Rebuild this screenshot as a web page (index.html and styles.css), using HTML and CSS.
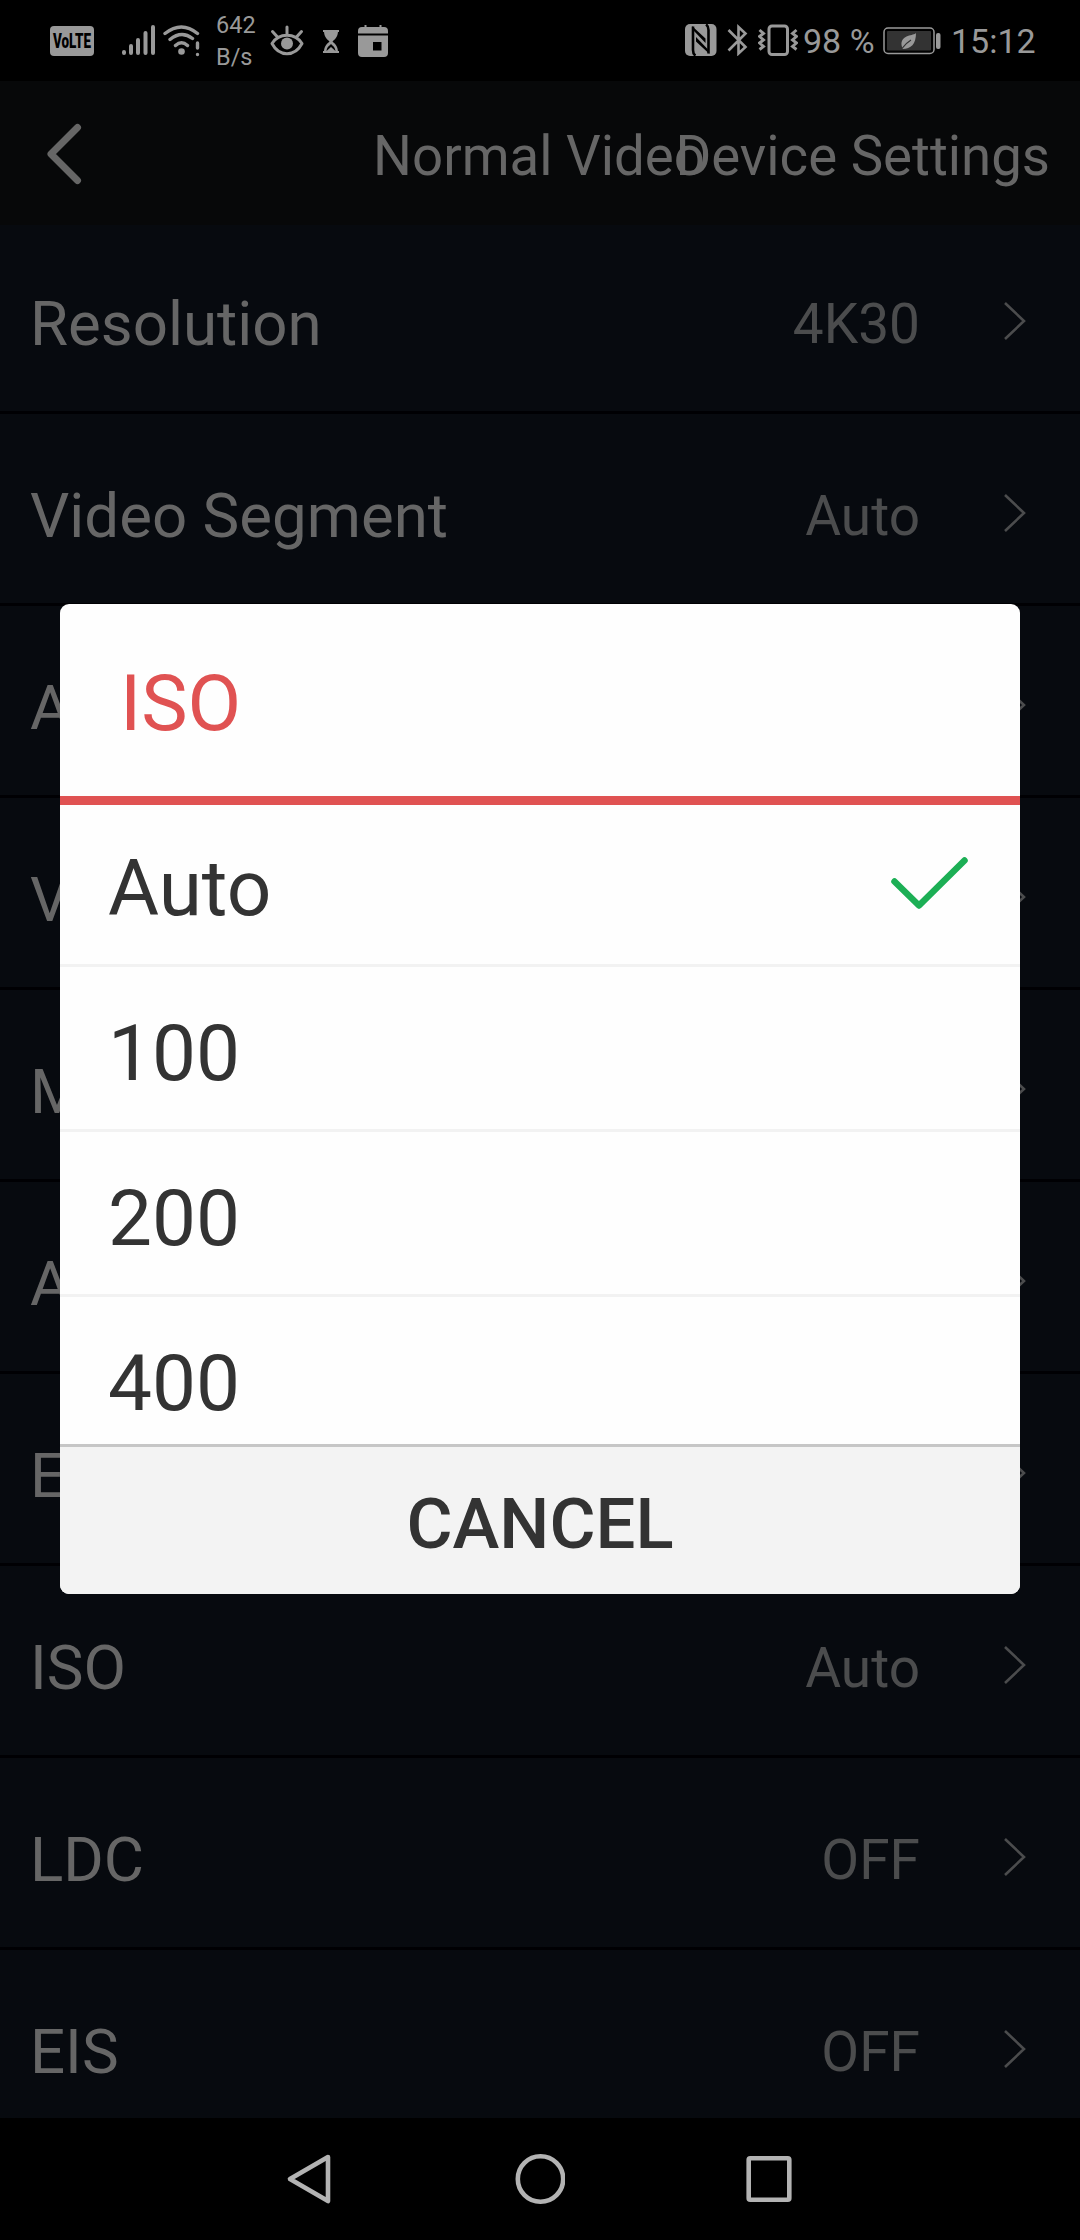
FILE: index.html
```html
<!DOCTYPE html>
<html lang="en">
<head>
<meta charset="utf-8">
<title>Device Settings</title>
<link rel="stylesheet" href="styles.css">
</head>
<body>
<div class="screen">
  <div class="statusbar">
    <div class="status-left">
      <svg class="volte" width="44" height="30" viewBox="0 0 44 30"><rect width="44" height="30" rx="4" fill="#999"/><text x="3" y="22" textLength="38" lengthAdjust="spacingAndGlyphs" class="volte-text">VoLTE</text></svg>
      <svg class="signal" width="34" height="32" viewBox="0 0 34 32" stroke="#999" stroke-width="4" stroke-linecap="round"><path d="M2 28v1M9 22v7M16 16v13M23.500 9v20M31 3v26"/></svg>
      <svg class="wifi" width="37" height="32" viewBox="0 0 37 32" fill="none" stroke="#999" stroke-width="3.400" stroke-linecap="round"><path d="M2 8.500Q18.500-4.500 34.500 8.500M7 14.500Q18.500 5 29.500 13.500M12.500 20.500Q18.500 15 24.500 20.500"/><circle cx="18.500" cy="26.500" r="3.300" fill="#999" stroke="none"/><path d="M34.500 18v5M34.500 29.400v.2"/></svg>
      <div class="speed">642<br>B/s</div>
      <svg class="eye" width="34" height="31" viewBox="0 0 34 31" fill="none" stroke="#999" stroke-width="3" stroke-linecap="round"><path d="M2 18.500C9 7.500 25 7.500 32 18.500C25 32 9 32 2 18.500ZM17 2v7M2.500 6.500l4.500 5M31.500 6.500l-4.500 5" stroke-linejoin="round"/><circle cx="17" cy="18.500" r="6" fill="#999" stroke="none"/></svg>
      <svg class="hourglass" width="18" height="23" viewBox="0 0 18 23"><path d="M1 1h16M1 22h16" stroke="#999" stroke-width="2"/><path d="M2 1h14c0 6-3 8-5.500 10.500C13 14 16 16 16 22H2c0-6 3-8 5.500-10.500C5 9 2 7 2 1Z" fill="#999"/><path d="M4.500 21c.5-4 2.500-5 4.500-7 2 2 4 3 4.500 7l-4.500-4Z" fill="#000"/></svg>
      <svg class="calendar" width="30" height="32" viewBox="0 0 30 32" fill="#999"><path d="M0 8.500V6q0-4 4-4h2.500V0h2v2h13V0h2v2H26q4 0 4 4v2.500ZM0 10.500h30V28q0 4-4 4H4q-4 0-4-4Z"/><path d="M15 17h8.500v8.500H15Z" fill="#000"/></svg>
    </div>
    <div class="status-right">
      <svg class="nfc" width="32" height="32" viewBox="0 0 32 32"><rect width="31.500" height="32" rx="5" fill="#999"/><path d="M8 2.500V26Q8 30 10.500 31.500M23.500 29.500V6Q23.500 2 21 .500" fill="none" stroke="#000" stroke-width="2.600"/><path d="M7 2L20.500 14.500V19L9 7ZM24.500 30L11 17.500V13L22.500 25Z" fill="#000"/></svg>
      <svg class="bluetooth" width="21" height="32" viewBox="0 0 21 32" fill="none" stroke="#999" stroke-width="2.600" stroke-linejoin="miter"><path d="M1.500 6L18.500 23 11.500 29.500V3L18.500 9.500 1.500 26.500"/></svg>
      <svg class="vibrate" width="40" height="32" viewBox="0 0 40 32" fill="none" stroke="#999" stroke-width="3"><rect x="11" y="2" width="18.500" height="28.500" rx="3"/><path d="M1.500 6l4 3.500-4 3 4 3.500-4 3 4 3.500-4 3M38.500 6l-4 3.500 4 3-4 3.500 4 3-4 3.500 4 3" stroke-width="2.900"/></svg>
      <div class="battery-level">98 %</div>
      <svg class="battery" width="58" height="28" viewBox="0 0 58 28"><rect x="1" y="1" width="50" height="25.500" rx="4" fill="#000" stroke="#999" stroke-width="1.500"/><rect x="4" y="4" width="44" height="19.500" rx="1" fill="#333"/><path d="M33 6C31 9 18 7 18.500 18l1 4C28 22 33 17 33 6Z" fill="#999"/><path d="M18.500 22Q23 16 28 13" stroke="#333" stroke-width="1.200" fill="none"/><rect x="53" y="6" width="4.500" height="16" rx="2" fill="#999"/></svg>
      <div class="clock">15:12</div>
    </div>
  </div>

  <div class="header">
    <svg class="back" width="36" height="62" viewBox="0 0 36 62"><path d="M31.500 4.500L5 31l26.500 26.500" fill="none" stroke="#666" stroke-width="7" stroke-linecap="round" stroke-linejoin="round"/></svg>
    <div class="header-title">Normal Video</div>
    <div class="header-link">Device Settings</div>
  </div>

  <div class="settings">
    <div class="row"><span class="label">Resolution</span><span class="value">4K30</span><svg class="chevron" viewBox="0 0 22 38"><path d="M1 1l19 18L1 37"/></svg></div>
    <div class="row"><span class="label">Video Segment</span><span class="value">Auto</span><svg class="chevron" viewBox="0 0 22 38"><path d="M1 1l19 18L1 37"/></svg></div>
    <div class="row"><span class="label">A</span><span class="value"></span><svg class="chevron" viewBox="0 0 22 38"><path d="M1 1l19 18L1 37"/></svg></div>
    <div class="row"><span class="label">V</span><span class="value"></span><svg class="chevron" viewBox="0 0 22 38"><path d="M1 1l19 18L1 37"/></svg></div>
    <div class="row"><span class="label">M</span><span class="value"></span><svg class="chevron" viewBox="0 0 22 38"><path d="M1 1l19 18L1 37"/></svg></div>
    <div class="row"><span class="label">A</span><span class="value"></span><svg class="chevron" viewBox="0 0 22 38"><path d="M1 1l19 18L1 37"/></svg></div>
    <div class="row"><span class="label">E</span><span class="value"></span><svg class="chevron" viewBox="0 0 22 38"><path d="M1 1l19 18L1 37"/></svg></div>
    <div class="row"><span class="label">ISO</span><span class="value">Auto</span><svg class="chevron" viewBox="0 0 22 38"><path d="M1 1l19 18L1 37"/></svg></div>
    <div class="row"><span class="label">LDC</span><span class="value">OFF</span><svg class="chevron" viewBox="0 0 22 38"><path d="M1 1l19 18L1 37"/></svg></div>
    <div class="row"><span class="label">EIS</span><span class="value">OFF</span><svg class="chevron" viewBox="0 0 22 38"><path d="M1 1l19 18L1 37"/></svg></div>
  </div>

  <div class="navbar">
    <svg width="50" height="52" viewBox="0 0 50 52"><path d="M45 4L7 26l38 22Z"/></svg>
    <svg width="52" height="52" viewBox="0 0 52 52"><circle cx="26" cy="26" r="22.700"/></svg>
    <svg width="50" height="52" viewBox="0 0 50 52"><rect x="4.700" y="5.200" width="40.600" height="41.600" rx="1.500"/></svg>
  </div>

  <div class="dialog">
    <div class="dialog-title">ISO</div>
    <div class="options">
      <div class="option"><span>Auto</span><svg class="check" width="78" height="54" viewBox="0 0 78 54"><path d="M4.500 25.500L29 49.500 74.500 4.500"/></svg></div>
      <div class="option"><span>100</span></div>
      <div class="option"><span>200</span></div>
      <div class="option"><span>400</span></div>
    </div>
    <div class="cancel">CANCEL</div>
  </div>
</div>
</body>
</html>
```
FILE: styles.css
```css
* { box-sizing: border-box; }
body { margin: 0; background: #000; font-family: Roboto, sans-serif; }
svg { display: block; flex: none; }
.screen { position: relative; width: 1080px; height: 2240px; overflow: hidden; display: flex; flex-direction: column; }

.statusbar { height: 81px; flex: none; display: flex; justify-content: space-between; padding: 0 46px 0 50px; background: #000; color: #999; }
.status-left, .status-right { display: flex; align-items: flex-start; }
.volte { margin-top: 26px; overflow: visible; }
.volte-text { font: 900 20px Roboto, sans-serif; fill: #000; }
.signal { margin: 24px 0 0 28px; }
.wifi { margin: 25px 0 0 7px; }
.speed { width: 44px; margin: 9px 0 0 16px; font-size: 23.5px; line-height: 32px; white-space: nowrap; }
.eye { margin: 25px 0 0 10px; }
.hourglass { margin: 30px 0 0 18px; }
.calendar { margin: 25px 0 0 18px; }
.nfc { margin-top: 24px; }
.bluetooth { margin: 24px 0 0 10px; }
.vibrate { margin: 24px 0 0 10px; }
.battery-level { margin-left: 5px; width: 80px; font-size: 34px; line-height: 83px; white-space: nowrap; }
.battery { margin-top: 27px; }
.clock { margin-left: 10px; width: 83px; font-size: 34px; line-height: 83px; white-space: nowrap; }

.header { position: relative; z-index: 1; height: 144px; flex: none; display: grid; grid-template-columns: 300px 1fr 300px; align-items: center; background: #070809; color: #666; font-size: 54.6px; white-space: nowrap; }
.back { margin: 1px 0 0 46px; }
.header-title { padding: 5px 2px 0 0; text-align: center; margin: 0 -60px; }
.header-link { padding-top: 5px; display: flex; justify-content: flex-end; margin-right: 30px; }

.settings { flex: 1; min-height: 0; margin-top: -3px; overflow: hidden; background: #070a0f; }
.row { height: 192px; padding: 14px 54px 0 30px; border-bottom: 3px solid #000003; display: flex; align-items: center; }
.label { flex: 1; font-size: 61.8px; color: #666; }
.value { font-size: 55px; color: #4b4c4d; margin-right: 84px; }
.chevron { width: 22px; height: 38px; margin-top: -5px; fill: none; stroke: #4b4c4d; stroke-width: 2.6; }

.navbar { height: 122px; flex: none; display: flex; justify-content: space-between; align-items: center; padding: 0 286px 0 283px; background: #000; }
.navbar svg { fill: none; stroke: #b3b3b3; stroke-width: 4.6; stroke-linejoin: round; }
.navbar circle { transform: translateX(1.5px); }

.dialog { position: absolute; z-index: 2; left: 60px; top: 604px; width: 960px; height: 990px; border-radius: 9px; overflow: hidden; background: #fefefe; color: #333; display: flex; flex-direction: column; }
.dialog-title { height: 201px; flex: none; padding: 7px 60px 0; display: flex; align-items: center; border-bottom: 9px solid #e05252; color: #e05252; font-size: 78px; }
.options { flex: 1; min-height: 0; overflow: hidden; }
.option { height: 165px; padding: 10px 52px 0 48px; display: flex; align-items: center; justify-content: space-between; border-bottom: 3px solid #f2f2f2; font-size: 78.3px; }
.option:first-child { margin-top: -3px; }
.check { margin-top: -10px; fill: none; stroke: #1caf55; stroke-width: 6.5; stroke-linecap: round; stroke-linejoin: round; }
.cancel { height: 150px; flex: none; padding-top: 7px; border-top: 3px solid #c6c6c6; background: #f3f3f3; display: flex; align-items: center; justify-content: center; font-size: 70.6px; font-weight: 500; }
```
